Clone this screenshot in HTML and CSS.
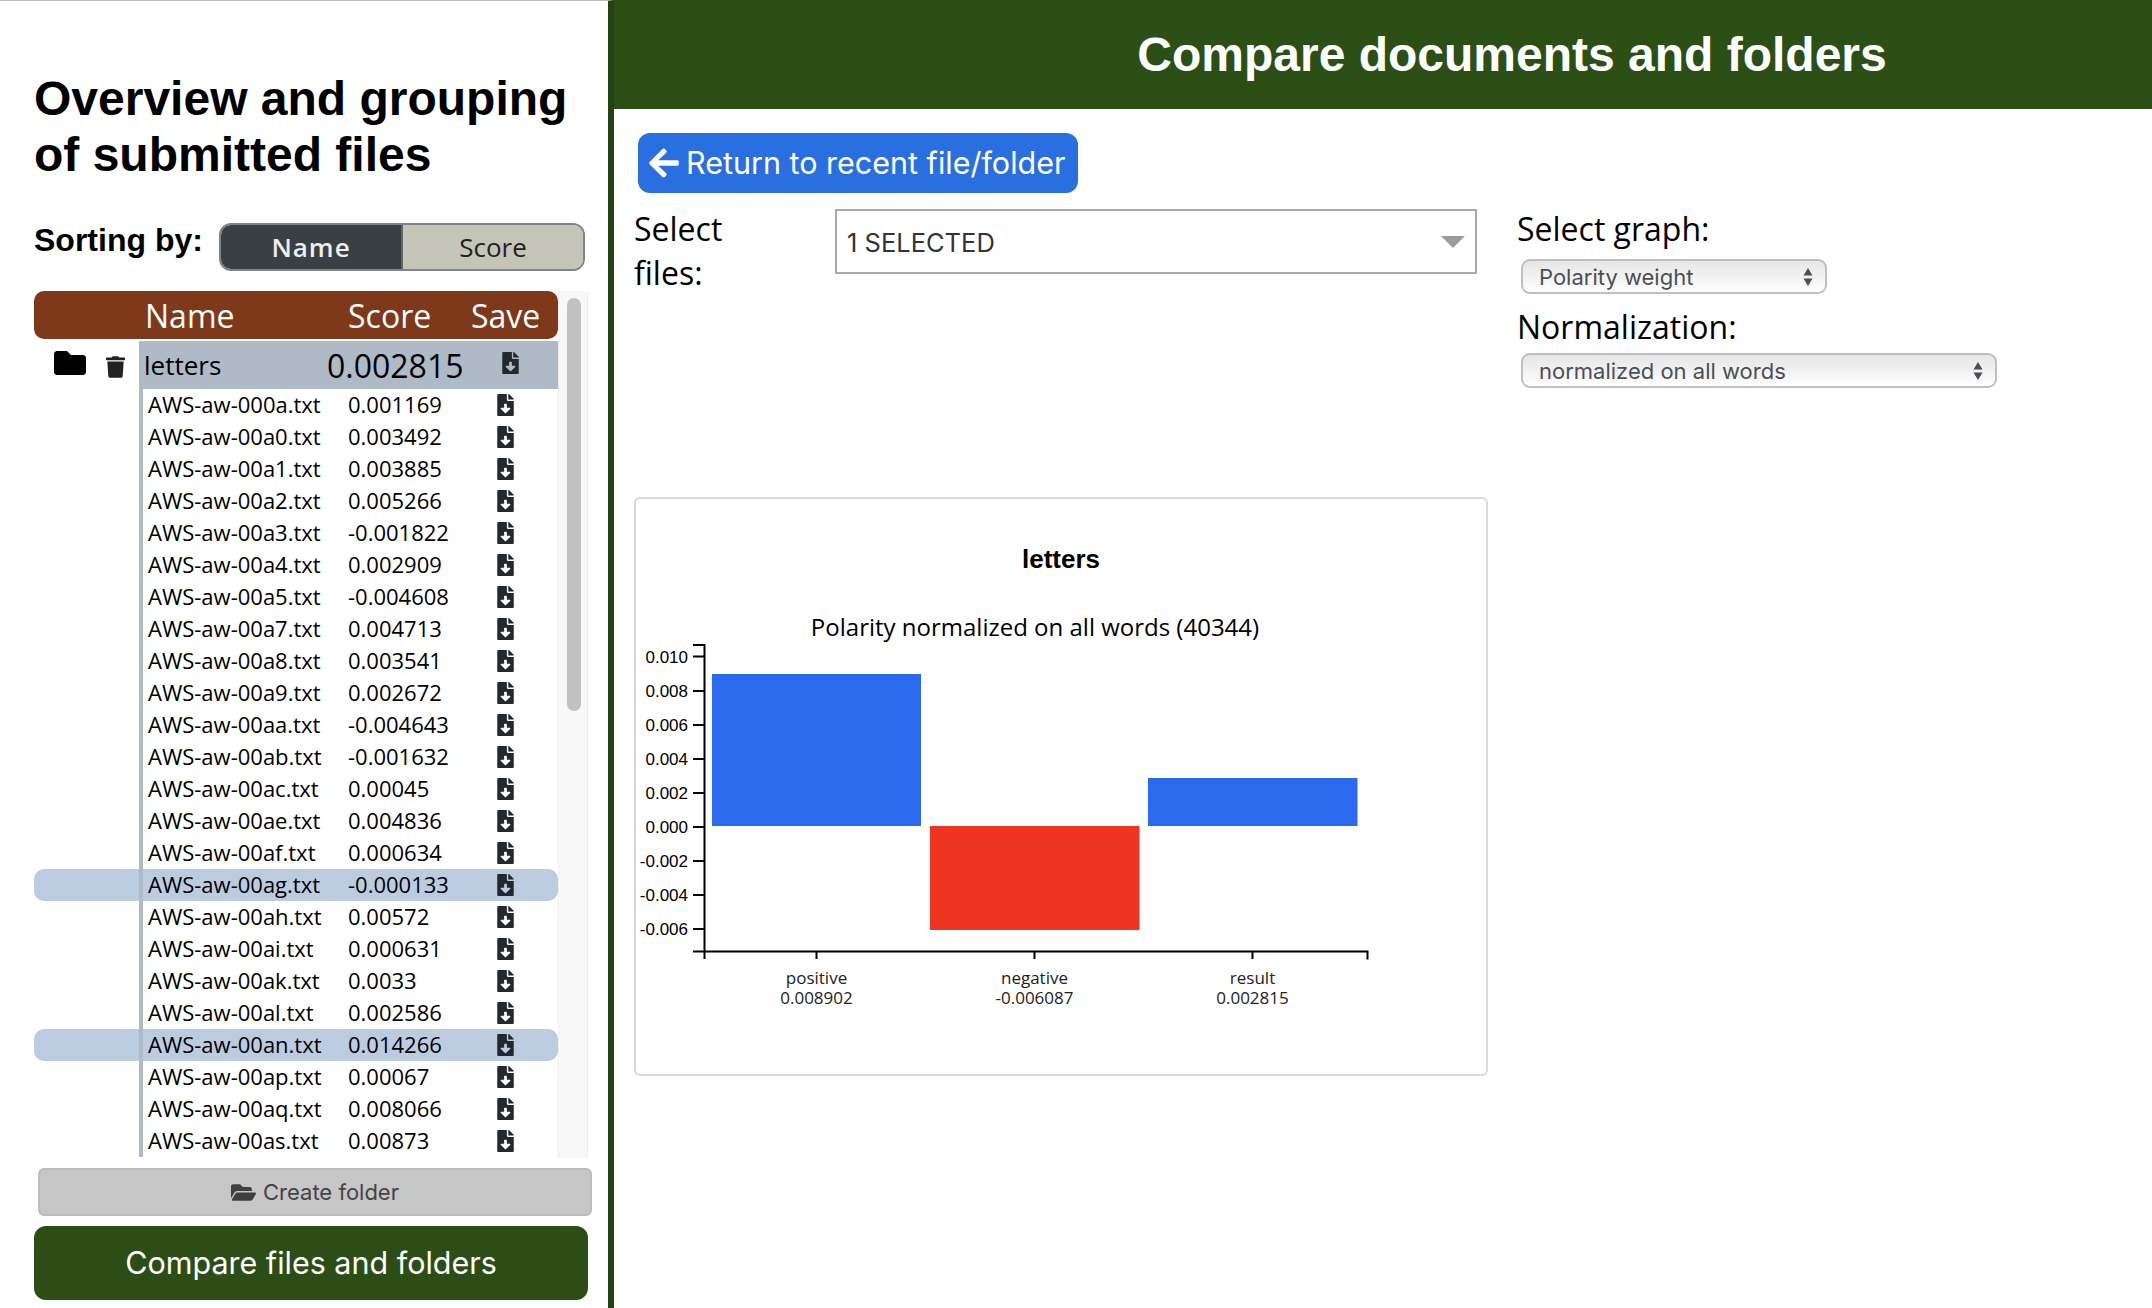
FILE: index.html
```html
<!DOCTYPE html>
<html lang="en">
<head>
    <meta charset="UTF-8">
    <title>Compare documents and folders</title>
    <link rel="stylesheet" href="styles.css">
</head>
<body>

    <!-- Shared icons -->
    <svg class="defs" width="0" height="0">
        <symbol id="i-save" viewBox="0 0 384 512"><path d="M224 136V0H24C10.7 0 0 10.7 0 24v464c0 13.3 10.7 24 24 24h336c13.3 0 24-10.7 24-24V160H248c-13.2 0-24-10.8-24-24zm76.45 211.36l-96.42 95.7c-6.65 6.61-17.39 6.61-24.04 0l-96.42-95.7C73.42 337.29 80.54 320 94.82 320H160v-80c0-8.84 7.16-16 16-16h32c8.84 0 16 7.16 16 16v80h65.18c14.28 0 21.4 17.29 11.27 27.36zM377 105L279.1 7c-4.5-4.5-10.6-7-17-7H256v128h128v-6.1c0-6.3-2.5-12.4-7-16.9z"/></symbol>
        <symbol id="i-updown" viewBox="0 0 10 20"><path d="M5 1l4.500 7.500h-9zM5 19L.5 11.500h9z"/></symbol>
    </svg>

    <!-- Left panel -->
    <aside class="side">
        <h1 class="side-title">Overview and grouping of submitted files</h1>

        <div class="sort-row">
            <span class="sort-label">Sorting by:</span>
            <div class="toggle">
                <span class="toggle-item toggle-on">Name</span>
                <span class="toggle-item">Score</span>
            </div>
        </div>

        <div class="list-wrap">
            <div class="list">
                <div class="list-head">
                    <span class="col-name">Name</span>
                    <span class="col-score">Score</span>
                    <span class="col-save">Save</span>
                </div>

                <div class="group">
                    <svg class="i-folder" viewBox="0 64 512 384"><path d="M464 128H272l-64-64H48C21.49 64 0 85.49 0 112v288c0 26.51 21.49 48 48 48h416c26.51 0 48-21.49 48-48V176c0-26.51-21.49-48-48-48z"/></svg>
                    <svg class="i-trash" viewBox="0 0 448 512"><path d="M432 32H312l-9.4-18.7A24 24 0 0 0 281.1 0H166.800a23.720 23.720 0 0 0-21.400 13.300L136 32H16A16 16 0 0 0 0 48v32a16 16 0 0 0 16 16h416a16 16 0 0 0 16-16V48a16 16 0 0 0-16-16zM53.200 467a48 48 0 0 0 47.900 45h245.800a48 48 0 0 0 47.900-45L416 128H32z"/></svg>
                    <div class="group-row">
                        <span class="group-name">letters</span>
                        <span class="group-score">0.002815</span>
                        <svg class="i-save"><use href="#i-save"/></svg>
                    </div>
                </div>

                <div class="row"><span class="file">AWS-aw-000a.txt</span><span class="score">0.001169</span><svg class="i-save"><use href="#i-save"/></svg></div>
                <div class="row"><span class="file">AWS-aw-00a0.txt</span><span class="score">0.003492</span><svg class="i-save"><use href="#i-save"/></svg></div>
                <div class="row"><span class="file">AWS-aw-00a1.txt</span><span class="score">0.003885</span><svg class="i-save"><use href="#i-save"/></svg></div>
                <div class="row"><span class="file">AWS-aw-00a2.txt</span><span class="score">0.005266</span><svg class="i-save"><use href="#i-save"/></svg></div>
                <div class="row"><span class="file">AWS-aw-00a3.txt</span><span class="score">-0.001822</span><svg class="i-save"><use href="#i-save"/></svg></div>
                <div class="row"><span class="file">AWS-aw-00a4.txt</span><span class="score">0.002909</span><svg class="i-save"><use href="#i-save"/></svg></div>
                <div class="row"><span class="file">AWS-aw-00a5.txt</span><span class="score">-0.004608</span><svg class="i-save"><use href="#i-save"/></svg></div>
                <div class="row"><span class="file">AWS-aw-00a7.txt</span><span class="score">0.004713</span><svg class="i-save"><use href="#i-save"/></svg></div>
                <div class="row"><span class="file">AWS-aw-00a8.txt</span><span class="score">0.003541</span><svg class="i-save"><use href="#i-save"/></svg></div>
                <div class="row"><span class="file">AWS-aw-00a9.txt</span><span class="score">0.002672</span><svg class="i-save"><use href="#i-save"/></svg></div>
                <div class="row"><span class="file">AWS-aw-00aa.txt</span><span class="score">-0.004643</span><svg class="i-save"><use href="#i-save"/></svg></div>
                <div class="row"><span class="file">AWS-aw-00ab.txt</span><span class="score">-0.001632</span><svg class="i-save"><use href="#i-save"/></svg></div>
                <div class="row"><span class="file">AWS-aw-00ac.txt</span><span class="score">0.00045</span><svg class="i-save"><use href="#i-save"/></svg></div>
                <div class="row"><span class="file">AWS-aw-00ae.txt</span><span class="score">0.004836</span><svg class="i-save"><use href="#i-save"/></svg></div>
                <div class="row"><span class="file">AWS-aw-00af.txt</span><span class="score">0.000634</span><svg class="i-save"><use href="#i-save"/></svg></div>
                <div class="row row-marked"><span class="file">AWS-aw-00ag.txt</span><span class="score">-0.000133</span><svg class="i-save"><use href="#i-save"/></svg></div>
                <div class="row"><span class="file">AWS-aw-00ah.txt</span><span class="score">0.00572</span><svg class="i-save"><use href="#i-save"/></svg></div>
                <div class="row"><span class="file">AWS-aw-00ai.txt</span><span class="score">0.000631</span><svg class="i-save"><use href="#i-save"/></svg></div>
                <div class="row"><span class="file">AWS-aw-00ak.txt</span><span class="score">0.0033</span><svg class="i-save"><use href="#i-save"/></svg></div>
                <div class="row"><span class="file">AWS-aw-00al.txt</span><span class="score">0.002586</span><svg class="i-save"><use href="#i-save"/></svg></div>
                <div class="row row-marked"><span class="file">AWS-aw-00an.txt</span><span class="score">0.014266</span><svg class="i-save"><use href="#i-save"/></svg></div>
                <div class="row"><span class="file">AWS-aw-00ap.txt</span><span class="score">0.00067</span><svg class="i-save"><use href="#i-save"/></svg></div>
                <div class="row"><span class="file">AWS-aw-00aq.txt</span><span class="score">0.008066</span><svg class="i-save"><use href="#i-save"/></svg></div>
                <div class="row"><span class="file">AWS-aw-00as.txt</span><span class="score">0.00873</span><svg class="i-save"><use href="#i-save"/></svg></div>
            </div>
            <div class="track"><div class="thumb"></div></div>
        </div>

        <button class="btn-create">
            <svg class="i-open" viewBox="0 64 576 384"><path d="M572.694 292.093L500.270 416.248A63.997 63.997 0 0 1 444.989 448H45.025c-18.523 0-30.064-20.093-20.731-36.093l72.424-124.155A64 64 0 0 1 152 256h399.964c18.523 0 30.064 20.093 20.730 36.093zM152 224h328v-48c0-26.510-21.490-48-48-48H272l-64-64H48C21.490 64 0 85.490 0 112v278.046l69.077-118.418C86.214 242.250 117.989 224 152 224z"/></svg>
            Create folder
        </button>
        <button class="btn-compare">Compare files and folders</button>
    </aside>

    <!-- Right panel -->
    <main class="main">
        <header class="main-head">Compare documents and folders</header>

        <div class="main-body">
            <button class="btn-return">
                <svg class="i-arrow" viewBox="0 0 448 512"><path d="M257.500 445.100l-22.200 22.200c-9.400 9.400-24.600 9.400-33.900 0L7 273c-9.400-9.400-9.400-24.600 0-33.900L201.400 44.700c9.400-9.400 24.600-9.400 33.900 0l22.200 22.200c9.500 9.500 9.300 25-.4 34.300L136.600 216H424c13.300 0 24 10.700 24 24v32c0 13.300-10.700 24-24 24H136.600l120.500 114.800c9.800 9.300 10 24.800.4 34.300z"/></svg>
                <span class="return-text">Return to recent file/folder</span>
            </button>

            <div class="controls">
                <label class="files-label">Select files:</label>
                <div class="multi">
                    <span class="multi-text">1 SELECTED</span>
                    <span class="multi-arrow"></span>
                </div>
                <div class="graph-opts">
                    <div class="opt-label">Select graph:</div>
                    <div class="select select-short"><span>Polarity weight</span><svg class="i-updown"><use href="#i-updown"/></svg></div>
                    <div class="opt-label opt-label-norm">Normalization:</div>
                    <div class="select select-long"><span>normalized on all words</span><svg class="i-updown"><use href="#i-updown"/></svg></div>
                </div>
            </div>

            <div class="card">
                <svg class="chart" viewBox="636 499 850 575" width="850" height="575">
                    <text class="chart-title" x="1061" y="568">letters</text>
                    <text class="chart-sub" x="1035" y="636">Polarity normalized on all words (40344)</text>

                    <rect class="bar-pos" x="712" y="674" width="209" height="152"/>
                    <rect class="bar-neg" x="930" y="826" width="209.500" height="104"/>
                    <rect class="bar-pos" x="1148" y="778" width="209.500" height="48"/>

                    <path class="axis" d="M693 645h11.500V951M693 951.500h674.500v8M704.500 951v8M816.500 951v8M1034.500 951v8M1252.500 951v8"/>
                    <path class="axis" d="M693 656.500h11M693 691h11M693 725h11M693 759h11M693 793h11M693 827h11M693 861h11M693 895h11M693 929h11"/>

                    <text class="tick" x="688" y="663">0.010</text>
                    <text class="tick" x="688" y="697">0.008</text>
                    <text class="tick" x="688" y="731">0.006</text>
                    <text class="tick" x="688" y="765">0.004</text>
                    <text class="tick" x="688" y="799">0.002</text>
                    <text class="tick" x="688" y="833">0.000</text>
                    <text class="tick" x="688" y="867">-0.002</text>
                    <text class="tick" x="688" y="901">-0.004</text>
                    <text class="tick" x="688" y="935">-0.006</text>

                    <text class="xlabel" x="816.500" y="984">positive</text>
                    <text class="xlabel" x="816.500" y="1004">0.008902</text>
                    <text class="xlabel" x="1034.500" y="984">negative</text>
                    <text class="xlabel" x="1034.500" y="1004">-0.006087</text>
                    <text class="xlabel" x="1252.500" y="984">result</text>
                    <text class="xlabel" x="1252.500" y="1004">0.002815</text>
                </svg>
            </div>
        </div>
    </main>

</body>
</html>
```

FILE: styles.css
```css
* {
    box-sizing: border-box;
}

body {
    margin: 0;
    width: 2152px;
    height: 1308px;
    overflow: hidden;
    display: flex;
    background-color: #fff;
    color: #000;
    font-family: "Open Sans", sans-serif;
}

.defs {
    display: block;
    height: 0;
    position: absolute;
}

/* Left panel */
.side {
    width: 614px;
    flex-shrink: 0;
    padding: 71px 0 0 34px;
    border-top: 1px solid #bbb;
    border-right: 6px solid #254312;
}

.side-title {
    margin: -1px 0 0;
    width: 560px;
    font-family: "Liberation Sans", Arial, sans-serif;
    font-size: 48px;
    line-height: 56px;
    font-weight: bold;
}

.sort-row {
    display: flex;
    margin-top: 40px;
    height: 48px;
}

.sort-label {
    width: 185px;
    font-family: "Liberation Sans", Arial, sans-serif;
    font-size: 32px;
    line-height: 34px;
    font-weight: bold;
}

.toggle {
    display: flex;
    width: 366px;
    border-radius: 12px;
    overflow: hidden;
    border: 2px solid #7d858b;
    font-size: 26px;
}

.toggle-item {
    flex: 1;
    display: flex;
    align-items: center;
    justify-content: center;
    background-color: #c4c4b8;
    color: #222;
}

.toggle-on {
    flex: none;
    width: 182px;
    background-color: #3a3f44;
    border-right: 2px solid #5d646a;
    color: #eee;
    font-weight: 600;
    letter-spacing: 1px;
}

.list-wrap {
    display: flex;
    margin-top: 20px;
    width: 554px;
    height: 867px;
}

.list {
    width: 524px;
    overflow: hidden;
}

.list-head {
    display: flex;
    align-items: center;
    height: 48px;
    margin-bottom: 2px;
    background-color: #7e391a;
    border-radius: 10px;
    color: #fff;
    font-size: 32px;
}

.col-name {
    margin-left: 111px;
    width: 203px;
}

.col-score {
    width: 123px;
}

.group {
    display: flex;
    height: 48px;
}

.i-folder {
    width: 32px;
    height: 24px;
    margin: 10px 0 0 20px;
}

.i-trash {
    width: 19px;
    height: 22px;
    margin: 15px 0 0 20px;
    fill: #222;
}

.group-row {
    display: flex;
    align-items: center;
    margin-left: 14px;
    width: 419px;
    background-color: #aebbc6;
}

.group-name {
    margin-left: 5px;
    width: 183px;
    font-size: 26px;
}

.group-score {
    width: 175px;
    font-size: 32px;
}

.group-row .i-save {
    margin-top: -4px;
}

.row {
    display: flex;
    align-items: center;
    height: 32px;
    margin-left: 105px;
    border-left: 4px solid #aebbc6;
    font-size: 22px;
}

.row-marked {
    margin-left: 0;
    padding-left: 105px;
    border-left: none;
    background-color: #bccce0;
    border-radius: 10px;
}

.file {
    width: 205px;
    padding: 0 0 2px 5px;
}

.score {
    width: 149px;
    padding-bottom: 2px;
}

.row-marked .file {
    width: 209px;
    border-left: 4px solid #aebbc6;
    line-height: 30px;
}

.i-save {
    width: 17px;
    height: 22px;
    fill: #23282c;
    flex-shrink: 0;
}

.track {
    width: 30px;
    padding: 7px 6px 0 8px;
    background-color: #f8f8f8;
    border-left: 1px solid #eee;
    border-right: 1px solid #eee;
}

.thumb {
    height: 413px;
    background-color: #c1c1c1;
    border-radius: 8px;
}

.btn-create {
    display: flex;
    align-items: center;
    justify-content: center;
    gap: 7px;
    width: 554px;
    height: 48px;
    margin: 10px 0 0 4px;
    background-color: #c6c6c6;
    border: 2px solid #bcbcbc;
    border-radius: 6px;
    color: #444;
    font-family: Inter, sans-serif;
    font-size: 22px;
}

.i-open {
    width: 25px;
    height: 17px;
    fill: #3f3f3f;
}

.btn-compare {
    display: block;
    width: 554px;
    height: 74px;
    margin-top: 10px;
    padding-bottom: 2px;
    background-color: #2c4d15;
    border: none;
    border-radius: 12px;
    color: #fff;
    font-family: Inter, sans-serif;
    font-size: 30.500px;
}

/* Right panel */
.main {
    flex: 1;
}

.main-head {
    height: 109px;
    padding-left: 258px;
    display: flex;
    align-items: center;
    justify-content: center;
    background-color: #2c4f16;
    color: #fff;
    font-family: "Liberation Sans", Arial, sans-serif;
    font-size: 48px;
    font-weight: bold;
}

.main-body {
    padding: 24px 0 0 20px;
}

.btn-return {
    display: flex;
    align-items: center;
    gap: 7px;
    width: 440px;
    height: 60px;
    margin-left: 4px;
    padding: 0 0 0 11px;
    background-color: #2a6fdf;
    border: none;
    border-radius: 12px;
    color: #fff;
    font-family: Inter, sans-serif;
    font-size: 30.500px;
    white-space: nowrap;
}

.return-text {
    margin-top: -2px;
}

.i-arrow {
    width: 30px;
    height: 34px;
    fill: #fff;
}

.controls {
    display: flex;
    height: 290px;
    margin-top: 14px;
}

.files-label {
    width: 201px;
    padding-right: 90px;
    font-size: 32px;
    line-height: 44px;
}

.multi {
    display: flex;
    align-items: center;
    justify-content: space-between;
    width: 642px;
    height: 65px;
    margin-top: 2px;
    padding: 0 10px;
    border: 2px solid #aaa;
    color: #333;
    font-family: Inter, sans-serif;
    font-size: 25.500px;
}

.multi-text {
    margin-top: 2px;
}

.multi-arrow {
    width: 0;
    height: 0;
    border-left: 12px solid transparent;
    border-right: 12px solid transparent;
    border-top: 12px solid #9b9b9b;
}

.graph-opts {
    margin-left: 40px;
}

.opt-label {
    font-size: 32px;
    line-height: 44px;
}

.opt-label-norm {
    margin-top: 11px;
}

.select {
    display: flex;
    align-items: center;
    justify-content: space-between;
    height: 35px;
    margin: 8px 0 0 4px;
    padding: 0 12px 0 16px;
    background: linear-gradient(#e6e6e6, #f4f4f4 60%, #fff);
    border: 2px solid #bfbfbf;
    border-radius: 9px;
    color: #4a4f57;
    font-family: Inter, "Liberation Sans", sans-serif;
    font-size: 22px;
}

.opt-label-norm + .select {
    margin-top: 4px;
}

.select-short {
    width: 306px;
}

.select-long {
    width: 476px;
}

.i-updown {
    width: 10px;
    height: 20px;
    fill: #4a4f57;
}

.card {
    width: 854px;
    height: 579px;
    border: 2px solid #d5dbe0;
    border-radius: 6px;
}

.chart {
    display: block;
}

.chart-title {
    text-anchor: middle;
    font-family: "Liberation Sans", Arial, sans-serif;
    font-size: 26px;
    font-weight: bold;
}

.chart-sub {
    text-anchor: middle;
    font-size: 24px;
}

.bar-pos {
    fill: #2a6aef;
}

.bar-neg {
    fill: #ef3423;
}

.axis {
    fill: none;
    stroke: #000;
    stroke-width: 2;
}

.tick {
    text-anchor: end;
    font-family: "Liberation Sans", Arial, sans-serif;
    font-size: 17px;
}

.xlabel {
    text-anchor: middle;
    font-size: 17px;
    fill: #222;
}
```
